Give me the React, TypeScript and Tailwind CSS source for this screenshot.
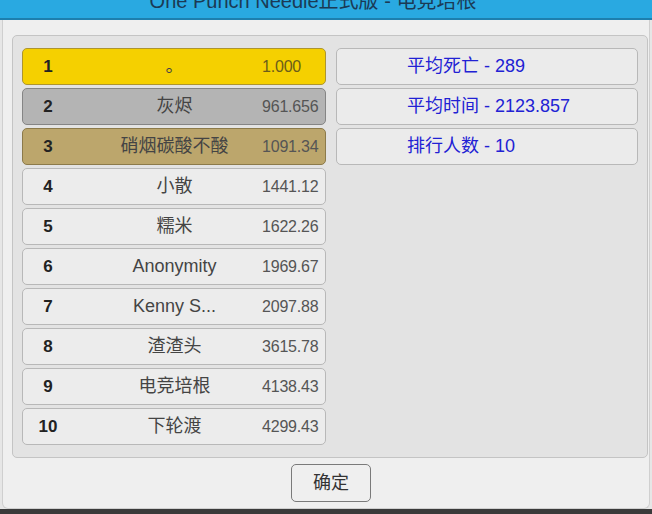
import React from 'react';

type Entry = { rank: number; name: string; score: string };

const entries: Entry[] = [
  { rank: 1, name: '。', score: '1.000' },
  { rank: 2, name: '灰烬', score: '961.656' },
  { rank: 3, name: '硝烟碳酸不酸', score: '1091.34' },
  { rank: 4, name: '小散', score: '1441.12' },
  { rank: 5, name: '糯米', score: '1622.26' },
  { rank: 6, name: 'Anonymity', score: '1969.67' },
  { rank: 7, name: 'Kenny S...', score: '2097.88' },
  { rank: 8, name: '渣渣头', score: '3615.78' },
  { rank: 9, name: '电竞培根', score: '4138.43' },
  { rank: 10, name: '下轮渡', score: '4299.43' },
];

const stats = ['平均死亡 - 289', '平均时间 - 2123.857', '排行人数 - 10'];

// medal colours for the top three, plain grey after that
const rowStyle = (rank: number) => {
  if (rank === 1) return 'bg-[#f5d000] border-[#ad9530]';
  if (rank === 2) return 'bg-[#b4b4b4] border-[#858585]';
  if (rank === 3) return 'bg-[#bca66c] border-[#8c7a4a]';
  return 'bg-[#ececec] border-[#b8b8b8]';
};

const scoreColor = (rank: number) => (rank === 1 ? 'text-[#6b5d1a]' : 'text-[#555]');

const RankRow = ({ entry }: { entry: Entry }) => (
  <div
    className={`grid grid-cols-[64px_175px_65px] items-center h-[37px] rounded-[5px] border ${rowStyle(entry.rank)}`}
  >
    <span className="w-[50px] text-center text-[17px] font-bold text-[#222]">{entry.rank}</span>
    <span className="text-center text-[18px] text-[#444] whitespace-nowrap">{entry.name}</span>
    <span className={`text-[16px] tracking-[-0.2px] ${scoreColor(entry.rank)}`}>{entry.score}</span>
  </div>
);

export default function App() {
  return (
    <div
      className="w-[652px] h-[514px] bg-[#e6e6e6] flex flex-col overflow-hidden"
      style={{ fontFamily: '"Liberation Sans", Arial, "Noto Sans CJK SC", sans-serif' }}
    >
      {/* title bar */}
      <div className="h-[20px] shrink-0 bg-[#29a9e1] border-b-2 border-[#1d7fae] overflow-hidden flex justify-center">
        <span className="-mt-[12px] mr-[26px] leading-[26px] text-[20px] text-[#1b3a55] whitespace-nowrap">
          One Punch Needle正式版 - 电竞培根
        </span>
      </div>

      <div className="flex-1 mx-[2px] bg-[#efefef] border-x border-b border-[#cfcfcf] rounded-b-[6px] flex flex-col">
        <div className="mt-[15px] ml-[9px] mr-px rounded-[5px] border border-[#c4c4c4] bg-[#e3e3e3] px-[9px] pt-[12px] pb-[12px] flex gap-[10px]">
          <div className="w-[304px] flex flex-col gap-[3px]">
            {entries.map((e) => (
              <RankRow key={e.rank} entry={e} />
            ))}
          </div>
          <div className="w-[303px] flex flex-col gap-[3px]">
            {stats.map((s) => (
              <div
                key={s}
                className="h-[37px] rounded-[5px] border border-[#b8b8b8] bg-[#ebebeb] flex items-center pl-[70px] text-[18px] text-[#2121d4] whitespace-nowrap"
              >
                {s}
              </div>
            ))}
          </div>
        </div>

        <div className="flex justify-center mt-[6px] pl-[10px]">
          <button className="w-[80px] h-[38px] rounded-[5px] border border-[#7a7a7a] bg-[#efefef] text-[18px] text-[#333]">
            确定
          </button>
        </div>
      </div>

      <div className="h-[5px] shrink-0 bg-[#3a3a3a]" />
    </div>
  );
}
